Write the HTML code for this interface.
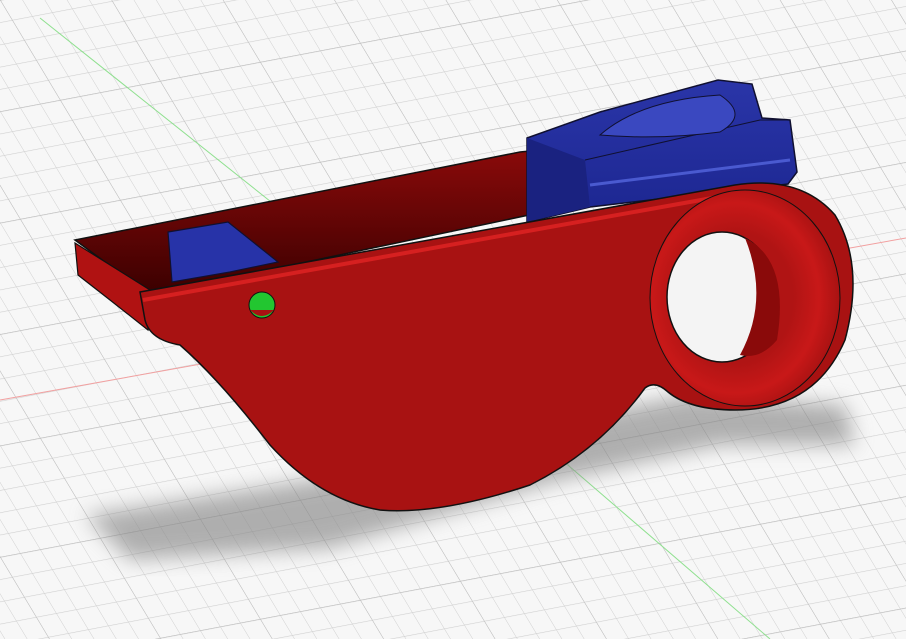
<!DOCTYPE html>
<html><head><meta charset="utf-8"><style>
html,body{margin:0;padding:0;background:#f6f6f6;}
svg{display:block}
</style></head><body>
<svg width="906" height="639" viewBox="0 0 906 639" xmlns="http://www.w3.org/2000/svg">
<defs>
<pattern id="g" width="20" height="20" patternUnits="userSpaceOnUse" patternTransform="matrix(1,-0.19,0.6,1,0,0)">
<path d="M0 0H20M0 0V20" stroke="#cfcfcf" stroke-width="1" fill="none"/>
</pattern>
<pattern id="g2" width="100" height="100" patternUnits="userSpaceOnUse" patternTransform="matrix(1,-0.19,0.6,1,0,0)">
<path d="M0 0H100M0 0V100" stroke="#bdbdbd" stroke-width="1" fill="none"/>
</pattern>
<filter id="blur"><feGaussianBlur stdDeviation="10"/></filter>
<linearGradient id="cav" x1="0" y1="0" x2="0" y2="1">
<stop offset="0" stop-color="#8a0a0a"/><stop offset="1" stop-color="#3a0000"/></linearGradient>
<radialGradient id="ring" cx="0.45" cy="0.5" r="0.55">
<stop offset="0.55" stop-color="#b01414"/><stop offset="0.8" stop-color="#c81818"/><stop offset="1" stop-color="#a81212"/></radialGradient>
<linearGradient id="blue" x1="0" y1="0" x2="0" y2="1">
<stop offset="0" stop-color="#2a35a8"/><stop offset="1" stop-color="#1c2690"/></linearGradient>
</defs>
<rect width="906" height="639" fill="#f7f7f7"/>
<rect width="906" height="639" fill="url(#g)"/>
<rect width="906" height="639" fill="url(#g2)"/>
<line x1="40" y1="18" x2="300" y2="225" stroke="#8fe08f" stroke-width="1"/>
<line x1="440" y1="355" x2="770" y2="639" stroke="#8fe08f" stroke-width="1"/>
<line x1="0" y1="400" x2="906" y2="238" stroke="#f2a0a0" stroke-width="1"/>
<!-- shadow -->
<path d="M85 515 L130 560 L330 548 L560 480 L720 445 L855 445 L845 405 L690 395 L560 420 L380 470 Z" fill="#888" opacity="0.65" filter="url(#blur)"/>
<!-- cavity / back wall -->
<path d="M75 240 L520 152 L540 150 L600 200 L150 295 Z" fill="url(#cav)" stroke="#111" stroke-width="1.5"/>
<!-- blue top block -->
<path d="M527 138 L600 112 L718 80 L752 84 L762 118 L790 120 L797 172 L788 184 L590 207 L527 222 Z" fill="url(#blue)" stroke="#101030" stroke-width="1.5"/>
<path d="M527 138 L585 160 L590 207 L527 222 Z" fill="#1a2280"/>
<path d="M585 160 L760 120 L790 120" stroke="#101030" stroke-width="1" fill="none"/>
<path d="M600 135 Q640 100 720 95 Q750 115 720 132 Q660 140 600 135 Z" fill="#3a48c0" stroke="#101030" stroke-width="1"/>
<path d="M590 185 L790 160" stroke="#4a5ad0" stroke-width="3"/>
<!-- blue small block -->
<path d="M168 232 L228 222 L278 262 L230 272 L172 282 Z" fill="#2733a8" stroke="#101030" stroke-width="1.2"/>
<!-- left lip -->
<path d="M75 243 L150 290 L148 330 L110 300 L78 275 Z" fill="#b01212" stroke="#111" stroke-width="1.2"/>
<!-- red front face -->
<path d="M140 292 L735 185 Q800 175 835 215 Q865 265 845 340 Q815 410 735 410 Q690 410 668 392 Q655 380 645 388 Q600 450 530 485 Q440 515 380 510 Q320 500 270 445 Q220 380 180 345 Q150 340 145 320 Z" fill="#a81212" stroke="#111" stroke-width="1.5"/>
<path d="M143 300 L740 193" stroke="#d62020" stroke-width="4"/>
<!-- ring -->
<ellipse cx="745" cy="298" rx="95" ry="108" fill="url(#ring)" stroke="#111" stroke-width="1"/>
<ellipse cx="722" cy="297" rx="55" ry="65" fill="#f4f4f4" stroke="#111" stroke-width="1.5"/>
<path d="M745 238 Q790 260 777 340 Q760 360 740 355 Q770 300 745 238 Z" fill="#8a0a0a"/>
<!-- green dot -->
<circle cx="262" cy="305" r="13" fill="#22c630" stroke="#111" stroke-width="1"/>
<path d="M250 310 Q262 322 274 310 Z" fill="#a81212"/>
</svg>
</body></html>
